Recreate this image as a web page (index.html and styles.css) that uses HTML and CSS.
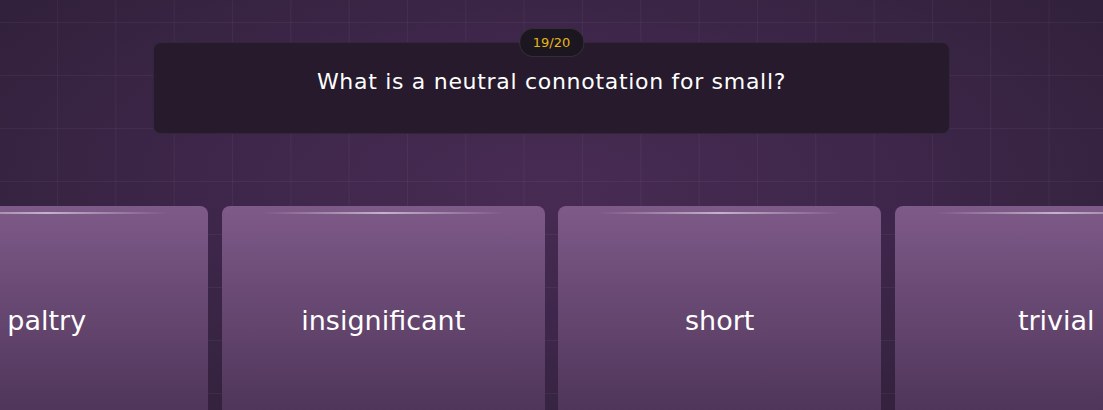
FILE: index.html
```html
<!DOCTYPE html>
<html lang="en">
<head>
  <meta charset="UTF-8">
  <title>Quiz</title>
  <link rel="stylesheet" href="styles.css">
</head>
<body>
  <div class="stage">
    <!-- Pergunta atual -->
    <div class="question">
      <span class="counter">19/20</span>
      <p class="question-text">What is a neutral connotation for small?</p>
    </div>

    <!-- Opções de resposta -->
    <div class="answers">
      <button class="answer">paltry</button>
      <button class="answer">insignificant</button>
      <button class="answer">short</button>
      <button class="answer">trivial</button>
    </div>
  </div>
</body>
</html>
```

FILE: styles.css
```css
html, body {
  margin: 0;
  height: 100%;
}
body {
  font-family: "DejaVu Sans", "Noto Sans", sans-serif;
  color: #fff;
  overflow: hidden;
  background-color: #352340;
  background-image:
    linear-gradient(rgba(255, 255, 255, 0.045) 1px, transparent 1px),
    linear-gradient(90deg, rgba(255, 255, 255, 0.045) 1px, transparent 1px),
    radial-gradient(ellipse 60% 70% at 50% 45%, #482b53 0%, #3d2649 55%, #32213c 100%);
  background-size: 58.33px 53px, 58.33px 53px, 100% 100%;
  background-position: 0 22px, -1.3px 0, 0 0;
}
.stage {
  display: flex;
  flex-direction: column;
  align-items: center;
}
.question {
  position: relative;
  margin-top: 42px;
  width: 797px;
  height: 92px;
  box-sizing: border-box;
  padding-top: 24px;
  background: #261a2c;
  border: 1px solid rgba(255, 255, 255, 0.06);
  border-radius: 8px;
  text-align: center;
}
.counter {
  position: absolute;
  top: -15px;
  left: 50%;
  transform: translateX(-50%);
  padding: 0 13px;
  height: 27px;
  line-height: 27px;
  border-radius: 14px;
  background: #1c1620;
  border: 1px solid rgba(255, 255, 255, 0.1);
  color: #e4b61a;
  font-size: 13px;
}
.question-text {
  margin: 0;
  font-size: 22px;
  line-height: 30px;
  letter-spacing: 0.7px;
}
.answers {
  display: flex;
  justify-content: center;
  gap: 13.5px;
  width: 1103px;
  margin-top: 72px;
}
.answer {
  position: relative;
  flex: 0 0 323px;
  height: 228px;
  padding-top: 2px;
  border: none;
  border-radius: 8px;
  background: linear-gradient(#7e5a89, #4a3154);
  color: #fff;
  font-family: inherit;
  font-size: 27px;
  cursor: pointer;
}
.answer::before {
  content: "";
  position: absolute;
  top: 6px;
  left: 40px;
  right: 40px;
  height: 2px;
  background: linear-gradient(90deg, transparent, rgba(255, 255, 255, 0.55), transparent);
}
.answer:hover {
  background: linear-gradient(#8a6495, #553a60);
}
```
